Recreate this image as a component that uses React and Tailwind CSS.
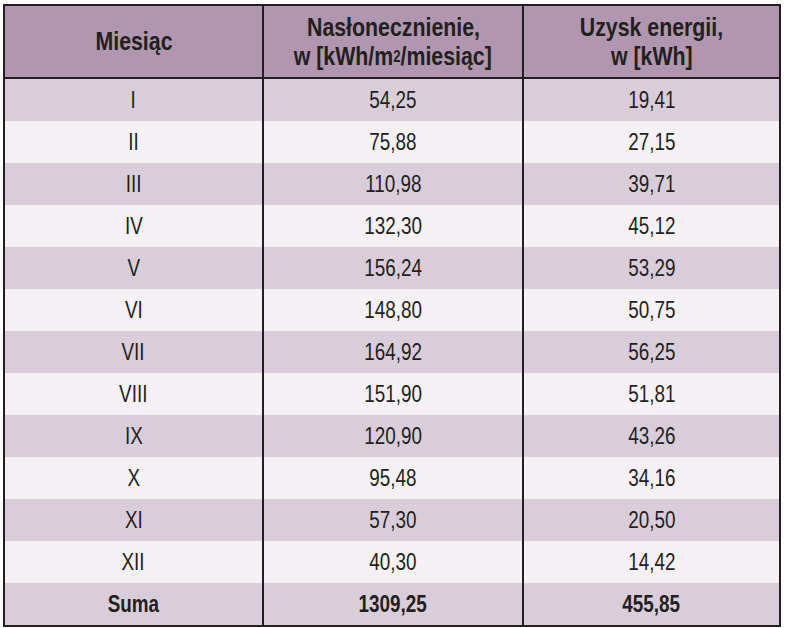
import React from "react";

const rows = [
  ["I", "54,25", "19,41"],
  ["II", "75,88", "27,15"],
  ["III", "110,98", "39,71"],
  ["IV", "132,30", "45,12"],
  ["V", "156,24", "53,29"],
  ["VI", "148,80", "50,75"],
  ["VII", "164,92", "56,25"],
  ["VIII", "151,90", "51,81"],
  ["IX", "120,90", "43,26"],
  ["X", "95,48", "34,16"],
  ["XI", "57,30", "20,50"],
  ["XII", "40,30", "14,42"],
];

const font = {
  fontFamily: '"Liberation Sans", Arial, sans-serif',
};

// narrow face: Arial metrics squeezed to Arial Narrow width
const Narrow = ({ children }) => (
  <span className="inline-block whitespace-nowrap scale-x-[0.82]">{children}</span>
);

const Row = ({ cells, shaded, bold }) => (
  <div
    className={`grid grid-cols-[259px_260px_1fr] h-[42px] text-[23px] leading-none ${
      shaded ? "bg-[#dacdda]" : "bg-[#f5f1f5]"
    } ${bold ? "font-bold" : ""}`}
  >
    <div className="flex items-center justify-center border-r-2 border-[#231f20]">
      <Narrow>{cells[0]}</Narrow>
    </div>
    <div className="flex items-center justify-center border-r-2 border-[#231f20]">
      <Narrow>{cells[1]}</Narrow>
    </div>
    <div className="flex items-center justify-center">
      <Narrow>{cells[2]}</Narrow>
    </div>
  </div>
);

export default function App() {
  return (
    <div className="min-h-screen bg-white pt-[4px] pl-[3px] text-[#231f20]" style={font}>
      <div className="w-[778px] border-2 border-[#231f20]">
        <div className="grid grid-cols-[259px_260px_1fr] h-[73px] bg-[#b096ae] border-b-2 border-[#231f20] font-bold text-[26px] leading-[29px]">
          <div className="flex items-center justify-center border-r-2 border-[#231f20]">
            <Narrow>Miesiąc</Narrow>
          </div>
          <div className="flex flex-col items-center justify-center border-r-2 border-[#231f20] text-center">
            <Narrow>Nasłonecznienie,</Narrow>
            <Narrow>
              w [kWh/m<sup className="text-[16px] relative -top-[3px]">2</sup>/miesiąc]
            </Narrow>
          </div>
          <div className="flex flex-col items-center justify-center text-center">
            <Narrow>Uzysk energii,</Narrow>
            <Narrow>w [kWh]</Narrow>
          </div>
        </div>
        {rows.map((r, i) => (
          <Row key={r[0]} cells={r} shaded={i % 2 === 0} />
        ))}
        <Row cells={["Suma", "1309,25", "455,85"]} shaded bold />
      </div>
    </div>
  );
}
